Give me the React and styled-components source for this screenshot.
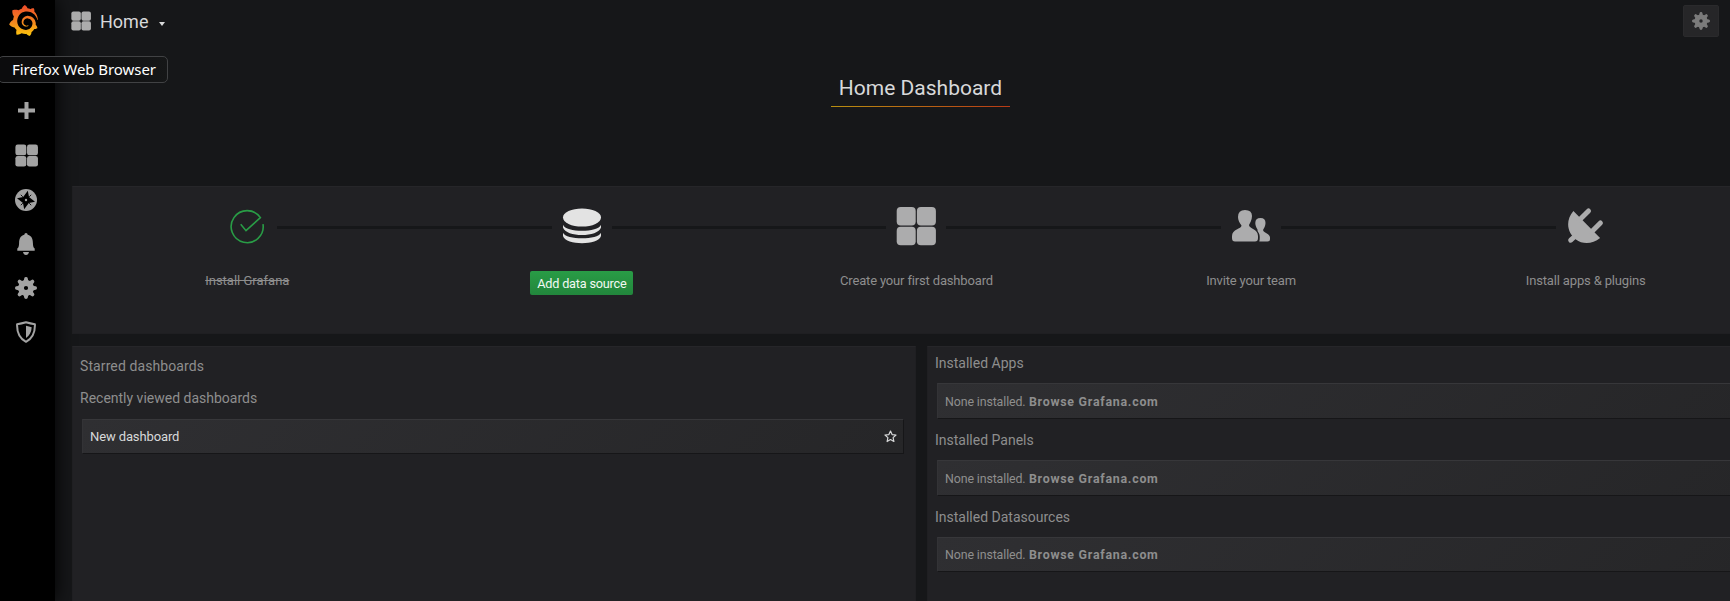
import React from "react";
import styled, { createGlobalStyle } from "styled-components";
import { SiGrafana } from "react-icons/si";

const GlobalStyle = createGlobalStyle`
  * { box-sizing: border-box; }
  body { margin: 0; background: #161719; overflow: hidden; }
`;

const Page = styled.div`
  display: flex;
  width: 1730px;
  height: 601px;
  overflow: hidden;
  position: relative;
  background: #161719;
  color: #8e8e8e;
  font-family: Roboto, "Liberation Sans", sans-serif;
  font-size: 13px;
`;

const Sidebar = styled.nav`
  flex: none;
  width: 55px;
  height: 601px;
  background: #000;
  box-shadow: 0 0 20px #000;
  display: flex;
  flex-direction: column;
  color: #a3a3a3;
`;

const Logo = styled.div`
  height: 89px;
  padding: 5px 0 0 8px;
`;

const NavItem = styled.div`
  width: 52px;
  height: 44.2px;
  display: flex;
  align-items: center;
  justify-content: center;
`;

const Main = styled.main`
  flex: none;
  width: 1705px;
  padding-left: 17px;
`;

const Navbar = styled.header`
  height: 55px;
  width: 1647px;
  display: flex;
  align-items: flex-start;
  justify-content: space-between;
`;

const PageTitle = styled.div`
  display: flex;
  align-items: center;
  height: 43px;
  margin-left: -1px;
  font-size: 18px;
  color: #d8d9da;
  svg { color: #acacac; margin-top: -1px; }
  span { margin-left: 9px; }
`;

const Caret = styled.i`
  margin: 5px 0 0 11px;
  border: 3.5px solid transparent;
  border-top: 4px solid #d8d9da;
  border-bottom: 0;
`;

const SettingsButton = styled.button`
  width: 36px;
  height: 32px;
  margin-top: 5px;
  padding: 0;
  border: 1px solid #2a2a2c;
  border-radius: 2px;
  background: #262628;
  color: #7b7b7b;
  display: flex;
  align-items: center;
  justify-content: center;
`;

const Hero = styled.section`
  width: 1697px;
  height: 131px;
  display: flex;
  justify-content: center;
  align-items: flex-start;
`;

const HeroTitle = styled.h1`
  width: 179px;
  height: 52px;
  margin: 0;
  padding-top: 20px;
  text-align: center;
  white-space: nowrap;
  font-size: 21px;
  font-weight: 400;
  line-height: 26px;
  color: #d8d9da;
  background: linear-gradient(to right, #b88f10, #b83a16) bottom / 100% 1px no-repeat;
`;

const panelSurface = `
  background: #212124;
  border: 1px solid #1f1f22;
  border-top-color: #262629;
`;

const Steps = styled.section`
  ${panelSurface}
  width: 1689px;
  height: 148px;
  padding: 16px 7px 0;
  display: flex;
`;

const Step = styled.div`
  flex: none;
  width: 334.6px;
  display: flex;
  flex-direction: column;
  align-items: center;
`;

const StepTrack = styled.div`
  width: 100%;
  height: 46px;
  display: flex;
  align-items: center;
  color: ${(p) => p.$color};
`;

const Connector = styled.div`
  flex: 1;
  height: 3px;
  margin-top: 2px;
  background: ${(p) => (p.$hidden ? "transparent" : "#161719")};
`;

const StepIcon = styled.div`
  width: 60px;
  height: 40px;
  display: flex;
  justify-content: center;
`;

const StepLabel = styled.span`
  margin-top: 22px;
  line-height: 20px;
  letter-spacing: ${(p) => (p.$done ? "0" : "-0.16px")};
  white-space: nowrap;
  text-decoration: ${(p) => (p.$done ? "line-through" : "none")};
`;

const StepButton = styled.button`
  width: 103px;
  height: 24px;
  margin-top: 22px;
  padding: 1px 0 0;
  border: 0;
  border-radius: 2px;
  background: linear-gradient(#299c46, #22863c);
  color: #f2f8f3;
  font: 12.7px/23px Roboto, sans-serif;
  letter-spacing: -0.2px;
  white-space: nowrap;
`;

const Columns = styled.div`
  display: flex;
  gap: 11px;
  margin-top: 12px;
`;

const Panel = styled.section`
  ${panelSurface}
  flex: none;
  width: ${(p) => p.$width}px;
  height: 270px;
  padding: ${(p) => p.$top}px 12px 0 7px;
`;

const PanelHeading = styled.h2`
  margin: 0;
  height: ${(p) => p.$height}px;
  font-size: 14px;
  font-weight: 400;
  line-height: 20px;
  letter-spacing: ${(p) => p.$spacing || 0}px;
`;

const Row = styled.div`
  height: ${(p) => p.$height}px;
  margin: 0 0 ${(p) => p.$gap || 0}px 2px;
  padding: 0 6px 0 7px;
  display: flex;
  align-items: center;
  justify-content: space-between;
  background: linear-gradient(135deg, #2f2f32, #262628);
  border-top: 1px solid #37373a;
  border-left: 1px solid #333336;
  box-shadow: 1px 1px 0 #161618;
  font-size: ${(p) => p.$size}px;
  letter-spacing: -0.12px;
  color: ${(p) => p.$color || "inherit"};
`;

const Link = styled.b`
  font-weight: 700;
  letter-spacing: 0.74px;
  margin-left: 0.5px;
`;

const Tooltip = styled.div`
  position: absolute;
  left: -2px;
  top: 56px;
  width: 170px;
  height: 27px;
  padding-left: 13px;
  border: 1px solid #414244;
  border-radius: 5px;
  background: linear-gradient(to right, #0c0c0d 30%, #161718);
  color: #fff;
  font: 15px/25px "Noto Sans", sans-serif;
  letter-spacing: -0.06px;
  white-space: nowrap;
`;

const GridIcon = ({ size }) => (
  <svg width={size} height={size} viewBox="0 0 40 40" fill="currentColor">
    {[0.7, 20.9].map((x) =>
      [1, 20.7].map((y) => <rect key={`${x}-${y}`} x={x} y={y} width="19" height="18.5" rx="4" />)
    )}
  </svg>
);

const GearIcon = ({ size }) => (
  <svg width={size} height={size} viewBox="0 0 22 22" fill="currentColor">
    <circle cx="11" cy="11" r="5" fill="none" stroke="currentColor" strokeWidth="5.8" />
    {[0, 45, 90, 135, 180, 225, 270, 315].map((a) => (
      <path key={a} transform={`rotate(${a} 11 11)`} d="M7.9 4.7Q9.1 3.5 9.2 1.4Q9.4 0 11 0Q12.6 0 12.8 1.4Q12.9 3.5 14.1 4.7Z" />
    ))}
  </svg>
);

const PlusIcon = () => (
  <svg width="18" height="18" viewBox="-1 0 18 18" fill="currentColor">
    <path d="M6.5 0h4v6.5H17v4h-6.5V17h-4v-6.5H0v-4h6.5z" />
  </svg>
);

const CompassIcon = () => (
  <svg width="22" height="24" viewBox="0 -2 22 24">
    <circle cx="11" cy="11" r="11" fill="currentColor" />
    <path fill="#000" d="M12.8 1.8L14 8L20 12.8L13.8 14L9.2 20.2L8 14L2 9.2L8.2 8Z" />
    <path stroke="#000" strokeWidth="0.9" d="M5.8 5.8l2 2M16.2 5.8l-2 2M16.2 16.2l-2-2M5.8 16.2l2-2" />
    <circle cx="11" cy="11" r="1.2" fill="currentColor" />
  </svg>
);

const BellIcon = () => (
  <svg width="22" height="22" viewBox="0 0 22 22" fill="currentColor">
    <path d="M9.3 1.7Q9.4 0 11 0Q12.6 0 12.7 1.7C16.8 2.7 17.8 6 17.9 10C18 13.2 18.3 14.6 19.7 15.5V17.8H2.3V15.5C3.7 14.6 4 13.2 4.1 10C4.2 6 5.2 2.7 9.3 1.7ZM8 19H14Q13.4 22 11 22Q8.6 22 8 19Z" />
  </svg>
);

const ShieldIcon = () => (
  <svg width="20" height="22" viewBox="0 0 20 22">
    <path fill="none" stroke="currentColor" strokeWidth="2" strokeLinejoin="round" d="M10 1.3Q14.5 2.6 18.9 3.2C19.2 11 16 17.5 10 20.8C4 17.5.8 11 1.1 3.2Q5.5 2.6 10 1.3Z" />
    <path fill="currentColor" d="M10 4.8Q13 5.8 15.7 6.2C15.4 11 13.5 14.8 10 17Z" />
  </svg>
);

const CheckIcon = () => (
  <svg width="40" height="40" fill="none" stroke="currentColor" strokeWidth="1.6">
    <path d="M36 18.2A16 16 0 1 1 33.4 11.6L19 24.7L13.7 18.2" />
  </svg>
);

const DatabaseIcon = () => (
  <svg width="40" height="40" fill="currentColor">
    <ellipse cx="20" cy="11.5" rx="19" ry="9.1" />
    <path d="M1 18.7C4 26.7 36 26.7 39 18.7V21.5C36 31.5 4 31.5 1 21.5ZM1 26.7C4 34.2 36 34.2 39 26.7V30C36 39.6 4 39.6 1 30Z" />
  </svg>
);

const TeamIcon = () => (
  <svg width="40" height="40" fill="currentColor">
    <path d="M7 11Q7 4 14 4Q21 4 21 10C21 14 19 17 18 19C18 23 27 22.5 27 30V32Q27 35.5 24 35.5H4Q1 35.5 1 32V30C1 23 10.5 23 10.5 19.5C8.5 17 7 14 7 11Z" />
    <path d="M24.3 17Q24.3 12 29.5 12Q34.5 12 34.5 17C34.5 20 33 22 32 24C33 27.5 39 27.5 39 31.5V33Q39 35.5 36.5 35.5H28.3C29 33 29 29 27.8 27C26.5 25.5 26.5 24.5 26.5 23.5C25 21 24.3 19 24.3 17Z" />
  </svg>
);

const PlugIcon = () => (
  <svg width="40" height="40" viewBox="1.6 0 40 40" fill="currentColor">
    <path d="M9 5L35.7 32C28 38.5 18 38.5 11.5 33.5C3 27 .5 15 9 5Z" />
    <path stroke="currentColor" strokeWidth="5" strokeLinecap="round" d="M15 14L24.1 5M27 26L36 17M12 29L6.3 34.2" />
  </svg>
);

const StarIcon = () => (
  <svg width="13" height="13" viewBox="0 0 13 13" fill="none" stroke="currentColor" strokeWidth="1.2" strokeLinejoin="round">
    <path d="M6.5 1l1.6 3.6 3.9.4-2.9 2.6.8 3.9-3.4-2-3.4 2 .8-3.9L1 5l3.9-.4z" />
  </svg>
);

const navIcons = [
  <PlusIcon />,
  <GridIcon size={23} />,
  <CompassIcon />,
  <BellIcon />,
  <GearIcon size={22} />,
  <ShieldIcon />,
];

const steps = [
  { label: "Install Grafana", icon: <CheckIcon />, color: "#299c46", done: true },
  { label: "Add data source", icon: <DatabaseIcon />, color: "#e3e3e3", action: true },
  { label: "Create your first dashboard", icon: <GridIcon size={40} />, color: "#acacad" },
  { label: "Invite your team", icon: <TeamIcon />, color: "#acacad" },
  { label: "Install apps & plugins", icon: <PlugIcon />, color: "#acacad" },
];

const installed = [
  { kind: "Apps", height: 35 },
  { kind: "Panels", height: 35 },
  { kind: "Datasources", height: 34 },
];

export default function App() {
  return (
    <Page>
      <GlobalStyle />
      <Sidebar>
        <Logo>
          <svg width="0" height="0" style={{ position: "absolute" }}>
            <linearGradient id="flame" x1="0" y1="1" x2="0" y2="0">
              <stop offset="0" stopColor="#fbc90c" />
              <stop offset="0.45" stopColor="#f4861f" />
              <stop offset="1" stopColor="#ee4a2b" />
            </linearGradient>
          </svg>
          <SiGrafana size={31} fill="url(#flame)" />
        </Logo>
        {navIcons.map((icon, i) => (
          <NavItem key={i}>{icon}</NavItem>
        ))}
      </Sidebar>
      <Main>
        <Navbar>
          <PageTitle>
            <GridIcon size={20} />
            <span>Home</span>
            <Caret />
          </PageTitle>
          <SettingsButton><GearIcon size={18} /></SettingsButton>
        </Navbar>
        <Hero>
          <HeroTitle>Home Dashboard</HeroTitle>
        </Hero>
        <Steps>
          {steps.map((s, i) => (
            <Step key={s.label}>
              <StepTrack $color={s.color}>
                <Connector $hidden={i === 0} />
                <StepIcon>{s.icon}</StepIcon>
                <Connector $hidden={i === steps.length - 1} />
              </StepTrack>
              {s.action ? <StepButton>{s.label}</StepButton> : <StepLabel $done={s.done}>{s.label}</StepLabel>}
            </Step>
          ))}
        </Steps>
        <Columns>
          <Panel $width={844} $top={9}>
            <PanelHeading $height={32} $spacing={0.1}>Starred dashboards</PanelHeading>
            <PanelHeading $height={31}>Recently viewed dashboards</PanelHeading>
            <Row $size={13} $height={34} $color="#d8d9da">New dashboard<StarIcon /></Row>
          </Panel>
          <Panel $width={834} $top={6}>
            {installed.map(({ kind, height }) => (
              <React.Fragment key={kind}>
                <PanelHeading $height={30}>Installed {kind}</PanelHeading>
                <Row $size={12.4} $height={height} $gap={12}>
                  <span>None installed. <Link>Browse Grafana.com</Link></span>
                </Row>
              </React.Fragment>
            ))}
          </Panel>
        </Columns>
      </Main>
      <Tooltip>Firefox Web Browser</Tooltip>
    </Page>
  );
}
